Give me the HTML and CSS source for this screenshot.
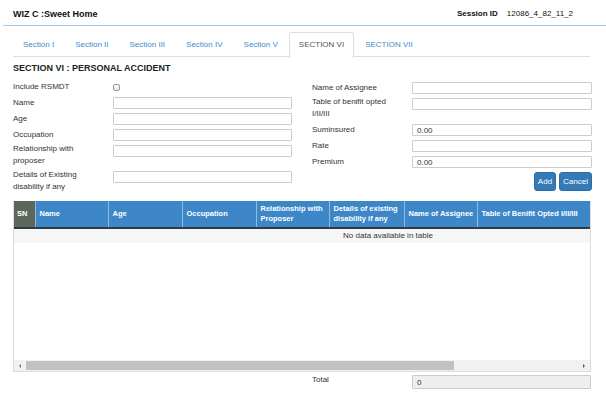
FILE: index.html
```html
<!DOCTYPE html>
<html>
<head>
<meta charset="utf-8">
<link rel="stylesheet" href="styles.css">
</head>
<body>
<div class="topbar">
  <div class="title">WIZ C :Sweet Home</div>
  <div class="session"><span class="session-label">Session ID</span><span class="session-value">12086_4_82_11_2</span></div>
</div>
<ul class="tabs">
  <li class="tab">Section I</li>
  <li class="tab">Section II</li>
  <li class="tab">Section III</li>
  <li class="tab">Section IV</li>
  <li class="tab">Section V</li>
  <li class="tab active">SECTION VI</li>
  <li class="tab">SECTION VII</li>
</ul>
<h2 class="heading">SECTION VI : PERSONAL ACCIDENT</h2>
<div class="form">
  <div class="col">
    <div class="row"><div class="lbl">Include RSMDT</div><div class="field"><input type="checkbox" class="check"></div></div>
    <div class="row"><div class="lbl">Name</div><input class="inp" type="text"></div>
    <div class="row"><div class="lbl">Age</div><input class="inp" type="text"></div>
    <div class="row"><div class="lbl">Occupation</div><input class="inp" type="text"></div>
    <div class="row two"><div class="lbl">Relationship with<br>proposer</div><input class="inp" type="text"></div>
    <div class="row two"><div class="lbl">Details of Existing<br>disability if any</div><input class="inp" type="text"></div>
  </div>
  <div class="col right">
    <div class="row"><div class="lbl">Name of Assignee</div><input class="inp" type="text"></div>
    <div class="row two"><div class="lbl">Table of benifit opted<br>I/II/III</div><input class="inp" type="text"></div>
    <div class="row"><div class="lbl">Suminsured</div><input class="inp" type="text" value="0.00"></div>
    <div class="row"><div class="lbl">Rate</div><input class="inp" type="text"></div>
    <div class="row"><div class="lbl">Premium</div><input class="inp" type="text" value="0.00"></div>
    <div class="buttons"><button class="btn">Add</button><button class="btn">Cancel</button></div>
  </div>
</div>
<div class="grid-box">
  <div class="grid-view">
    <table class="grid">
      <colgroup>
        <col class="c-sn"><col class="c-73"><col class="c-74"><col class="c-74"><col class="c-73"><col class="c-75"><col class="c-73"><col class="c-140"><col class="c-70"><col class="c-75">
      </colgroup>
      <thead>
        <tr>
          <th class="sn">SN</th>
          <th>Name</th>
          <th>Age</th>
          <th>Occupation</th>
          <th>Relationship with Proposer</th>
          <th>Details of existing disability if any</th>
          <th>Name of Assignee</th>
          <th>Table of Benifit Opted I/II/III</th>
          <th></th>
          <th></th>
        </tr>
      </thead>
      <tbody>
        <tr><td colspan="10" class="empty">No data available in table</td></tr>
      </tbody>
    </table>
  </div>
  <div class="scrollbar">
    <div class="sb-btn"><span class="arrow-left"></span></div>
    <div class="sb-track"><div class="sb-thumb"></div></div>
    <div class="sb-btn"><span class="arrow-right"></span></div>
  </div>
</div>
<div class="total">
  <div></div>
  <div class="row"><div class="lbl">Total</div><input class="inp readonly" type="text" value="0" readonly></div>
</div>
</body>
</html>
```
FILE: styles.css
```css
* { box-sizing: border-box; }
html, body {
  margin: 0;
  padding: 0;
  background: #fff;
  font-family: "Liberation Sans", Arial, sans-serif;
  font-size: 8px;
  color: #333;
}
.topbar {
  display: flex;
  justify-content: space-between;
  align-items: center;
  height: 26px;
  padding: 2px 33px 0 10px;
  margin-left: 3px;
  border-bottom: 1px solid #a9c9e9;
}
.title {
  font-weight: bold;
  font-size: 9px;
  color: #111;
}
.session {
  display: flex;
  gap: 9px;
  color: #111;
}
.session-label { font-weight: bold; }
.tabs {
  list-style: none;
  display: flex;
  margin: 6px 16px 0 13px;
  padding: 0;
  height: 25px;
  border-bottom: 1px solid #ddd;
}
.tab {
  padding: 0 9px;
  margin-right: 1px;
  line-height: 24px;
  height: 25px;
  color: #428bca;
  border: 1px solid transparent;
  border-bottom: none;
  border-radius: 3px 3px 0 0;
}
.tab.active {
  color: #555;
  background: #fff;
  border-color: #ddd;
  height: 26px;
}
.heading {
  margin: 5px 0 0 13px;
  font-size: 9px;
  line-height: 12px;
  font-weight: bold;
  color: #222;
}
.form {
  display: grid;
  grid-template-columns: 279px 280px;
  column-gap: 20px;
  margin: 7px 0 0 13px;
}
.col { display: flex; flex-direction: column; }
.col.right { padding-top: 1px; }
.row {
  display: flex;
  align-items: flex-start;
  margin-bottom: 4px;
}
.lbl {
  width: 100px;
  flex: none;
  line-height: 12px;
  color: #333;
}
.row.two .lbl { margin-top: -2px; line-height: 12px; }
.row.two { height: 22px; }
.field { display: flex; align-items: center; height: 12px; }
.inp {
  width: 179px;
  height: 12px;
  margin: 0;
  padding: 0 4px;
  border: 1px solid #ccc;
  border-radius: 1px;
  font-family: "Liberation Sans", Arial, sans-serif;
  font-size: 8px;
  color: #333;
  background: #fff;
  outline: none;
}
.col.right .inp { width: 180px; }
.inp.readonly { background: #eee; height: 14px; }
.check {
  appearance: none;
  -webkit-appearance: none;
  width: 7px;
  height: 7px;
  margin: 0;
  border: 1px solid #999;
  border-radius: 2px;
  background: linear-gradient(#fff, #e6e6e6);
}
.buttons {
  display: flex;
  justify-content: flex-end;
  gap: 3px;
}
.btn {
  height: 19px;
  padding: 0 3px;
  border: 1px solid #2e6da4;
  border-radius: 3px;
  background: #337ab7;
  color: #fff;
  font-family: "Liberation Sans", Arial, sans-serif;
  font-size: 8px;
}
.grid-box {
  margin: 4px 15px 0 13px;
  border: 1px solid #ddd;
  border-top: none;
  width: 578px;
}
.grid-view {
  height: 159px;
  overflow: hidden;
}
.grid {
  table-layout: fixed;
  border-collapse: collapse;
  width: 748px;
}
.c-sn { width: 21px; }
.c-70 { width: 70px; }
.c-73 { width: 73px; }
.c-74 { width: 74px; }
.c-75 { width: 75px; }
.c-140 { width: 140px; }
.grid th {
  height: 27px;
  padding: 0 1px 0 4px;
  background: #3d87c9;
  color: #fff;
  font-weight: bold;
  font-size: 7.5px;
  line-height: 10px;
  text-align: left;
  vertical-align: middle;
  border-left: 1px solid #8dbbe4;
  border-bottom: 2px solid #2f3a42;
}
.grid th.sn {
  background: #5c665a;
  border-left: none;
  padding: 0 3px;
}
.grid td.empty {
  height: 14px;
  padding: 0;
  text-align: center;
  background: #f6f6f6;
  color: #333;
  line-height: 14px;
}
.scrollbar {
  display: flex;
  height: 11px;
  background: #f1f1f1;
}
.sb-btn {
  width: 12px;
  flex: none;
  display: flex;
  align-items: center;
  justify-content: center;
}
.arrow-left {
  width: 0; height: 0;
  border-top: 2px solid transparent;
  border-bottom: 2px solid transparent;
  border-right: 2px solid #777;
}
.arrow-right {
  width: 0; height: 0;
  border-top: 2px solid transparent;
  border-bottom: 2px solid transparent;
  border-left: 2px solid #555;
}
.sb-track { flex: 1; display: flex; padding: 1px 0; }
.sb-thumb { width: 428px; background: #c1c1c1; }
.total {
  display: grid;
  grid-template-columns: 279px 280px;
  column-gap: 20px;
  margin: 3px 0 0 13px;
}
.total .lbl { line-height: 10px; }
```
